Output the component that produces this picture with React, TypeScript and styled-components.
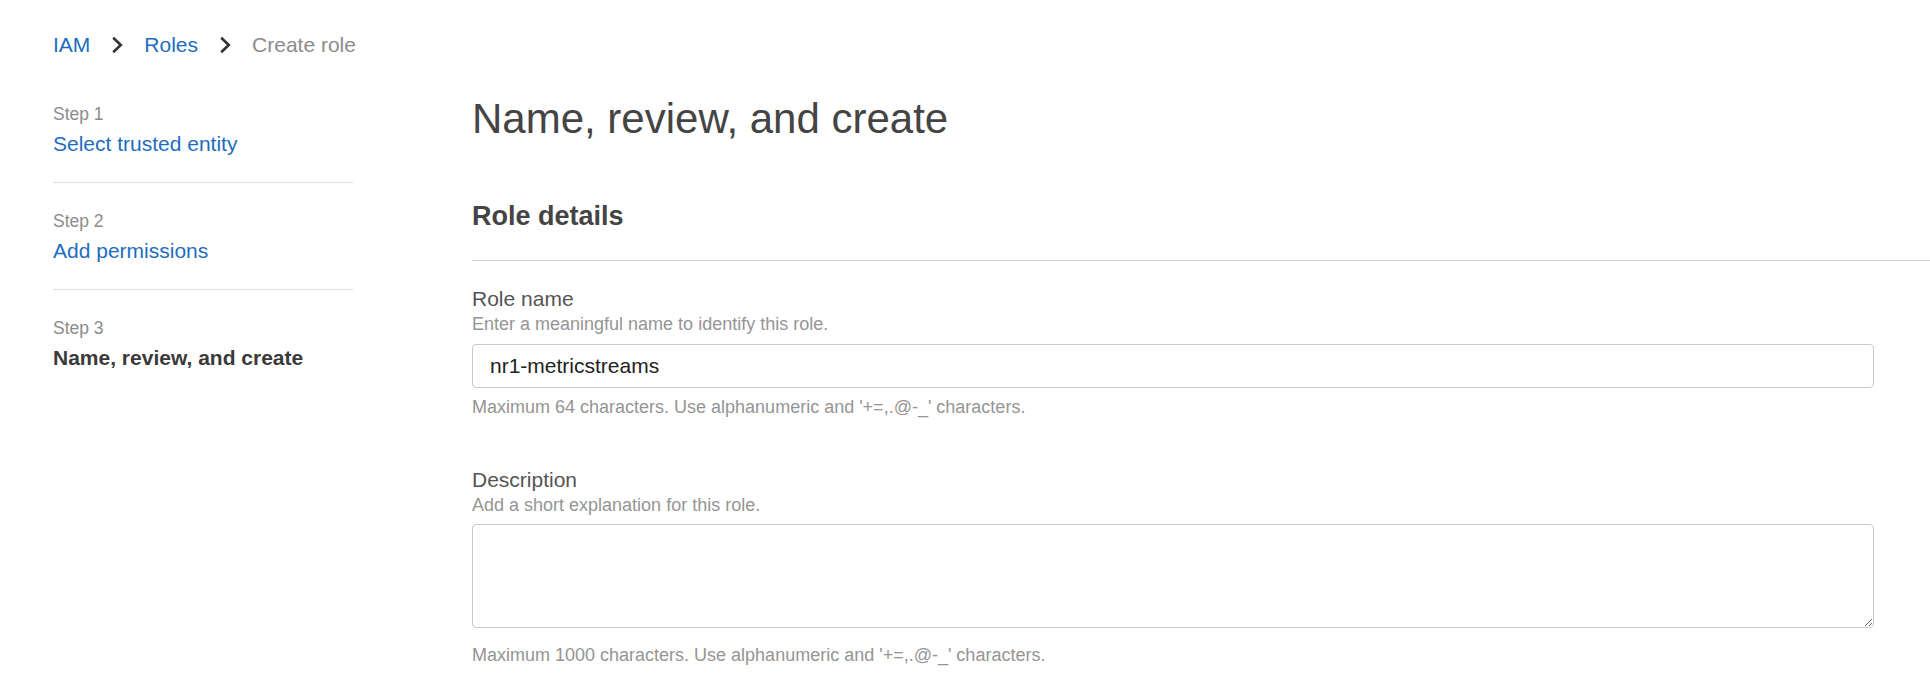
import React from "react";
import styled, { createGlobalStyle } from "styled-components";

const GlobalStyle = createGlobalStyle`
  html, body {
    margin: 0;
    padding: 0;
    background: #ffffff;
  }
  body {
    font-family: "Liberation Sans", Arial, Helvetica, sans-serif;
    color: #444444;
  }
  * { box-sizing: border-box; }
`;

const Page = styled.div`
  padding: 30px 0 40px 53px;
`;

const Breadcrumbs = styled.nav`
  display: flex;
  align-items: center;
  height: 30px;
  font-size: 21px;
  line-height: 30px;
  margin-bottom: 35px;
`;

const Crumb = styled.a<{ $current?: boolean }>`
  color: ${(p) => (p.$current ? "#8c8c8c" : "#1d6dbf")};
  text-decoration: none;
  cursor: ${(p) => (p.$current ? "default" : "pointer")};
`;

const Chevron = styled.svg`
  display: block;
  width: 12px;
  height: 18px;
  margin: 0 21px 0 21px;
`;

const Layout = styled.div`
  display: flex;
  align-items: flex-start;
  gap: 119px;
`;

const Sidebar = styled.ol`
  list-style: none;
  margin: 0;
  padding: 7px 0 0 0;
  width: 300px;
  flex: 0 0 300px;
`;

const StepItem = styled.li<{ $last?: boolean }>`
  padding: 0 0 23px 0;
  margin-bottom: 26px;
  border-bottom: ${(p) => (p.$last ? "none" : "1px solid #dedede")};
`;

const StepLabel = styled.div`
  font-size: 17.5px;
  line-height: 24px;
  color: #8c8c8c;
  margin-bottom: 3px;
`;

const StepTitle = styled.a<{ $active?: boolean }>`
  display: block;
  font-size: 21px;
  line-height: 30px;
  color: ${(p) => (p.$active ? "#3a3a3a" : "#1d6dbf")};
  font-weight: ${(p) => (p.$active ? 700 : 400)};
  text-decoration: none;
  cursor: ${(p) => (p.$active ? "default" : "pointer")};
`;

const Main = styled.main`
  flex: 1 1 auto;
  min-width: 0;
`;

const PageTitle = styled.h1`
  margin: 0;
  font-size: 42px;
  line-height: 48px;
  font-weight: 400;
  color: #444444;
`;

const SectionHeader = styled.h2`
  margin: 57px 0 0 0;
  font-size: 27px;
  line-height: 32px;
  font-weight: 700;
  color: #444444;
  padding-bottom: 28px;
  border-bottom: 1px solid #cfcfcf;
`;

const Fields = styled.div`
  margin-right: 56px;
  padding-top: 24px;
`;

const Field = styled.div<{ $spaced?: boolean }>`
  margin-top: ${(p) => (p.$spaced ? "48px" : "0")};
`;

const Label = styled.label`
  display: block;
  font-size: 21px;
  line-height: 27px;
  color: #555555;
`;

const Hint = styled.div`
  font-size: 18px;
  line-height: 24px;
  color: #959595;
`;

const Constraint = styled.div<{ $gap: number }>`
  margin-top: ${(p) => p.$gap}px;
  font-size: 18px;
  line-height: 22px;
  color: #959595;
`;

const TextInput = styled.input`
  display: block;
  width: 100%;
  height: 44px;
  margin-top: 8px;
  padding: 0 17px;
  border: 1px solid #c9c9c9;
  border-radius: 4px;
  font-family: "Liberation Sans", Arial, Helvetica, sans-serif;
  font-size: 21px;
  color: #222222;
  background: #ffffff;
  outline: none;
`;

const TextArea = styled.textarea`
  display: block;
  width: 100%;
  height: 104px;
  margin-top: 7px;
  padding: 10px 17px;
  border: 1px solid #c9c9c9;
  border-radius: 4px;
  font-family: "Liberation Sans", Arial, Helvetica, sans-serif;
  font-size: 21px;
  color: #222222;
  background: #ffffff;
  outline: none;
  resize: both;
`;

const ChevronIcon = () => (
  <Chevron viewBox="0 0 12 18" aria-hidden="true">
    <polyline
      points="2.2,1.8 9.8,9 2.2,16.2"
      fill="none"
      stroke="#333333"
      strokeWidth="2.6"
      strokeLinecap="butt"
      strokeLinejoin="miter"
    />
  </Chevron>
);

const steps = [
  { label: "Step 1", title: "Select trusted entity" },
  { label: "Step 2", title: "Add permissions" },
  { label: "Step 3", title: "Name, review, and create", active: true },
];

export default function App() {
  return (
    <>
      <GlobalStyle />
      <Page>
        <Breadcrumbs aria-label="Breadcrumbs">
          <Crumb href="#">IAM</Crumb>
          <ChevronIcon />
          <Crumb href="#">Roles</Crumb>
          <ChevronIcon />
          <Crumb $current>Create role</Crumb>
        </Breadcrumbs>
        <Layout>
          <Sidebar>
            {steps.map((s, i) => (
              <StepItem key={s.label} $last={i === steps.length - 1}>
                <StepLabel>{s.label}</StepLabel>
                <StepTitle href={s.active ? undefined : "#"} $active={s.active}>
                  {s.title}
                </StepTitle>
              </StepItem>
            ))}
          </Sidebar>
          <Main>
            <PageTitle>Name, review, and create</PageTitle>
            <SectionHeader>Role details</SectionHeader>
            <Fields>
              <Field>
                <Label htmlFor="role-name">Role name</Label>
                <Hint>Enter a meaningful name to identify this role.</Hint>
                <TextInput id="role-name" defaultValue="nr1-metricstreams" />
                <Constraint $gap={8}>
                  Maximum 64 characters. Use alphanumeric and '+=,.@-_' characters.
                </Constraint>
              </Field>
              <Field $spaced>
                <Label htmlFor="role-desc">Description</Label>
                <Hint>Add a short explanation for this role.</Hint>
                <TextArea id="role-desc" />
                <Constraint $gap={16}>
                  Maximum 1000 characters. Use alphanumeric and '+=,.@-_' characters.
                </Constraint>
              </Field>
            </Fields>
          </Main>
        </Layout>
      </Page>
    </>
  );
}
